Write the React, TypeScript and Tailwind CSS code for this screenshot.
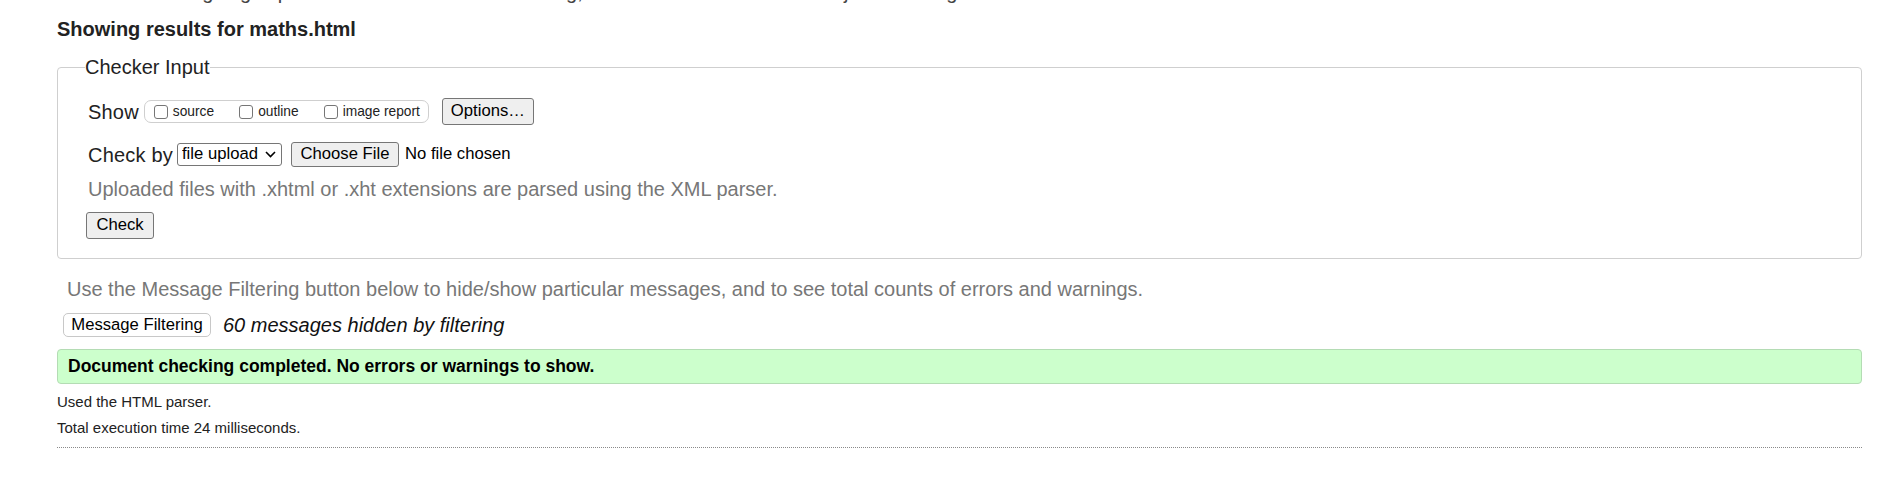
import React from 'react';

const font = "font-['Liberation_Sans',Arial,sans-serif]";

function NativeButton({ children, className = '' }: { children: React.ReactNode; className?: string }) {
  return (
    <button
      type="button"
      className={`inline-flex items-center justify-center border border-[#767676] bg-[#efefef] rounded-[3px] text-[16.67px] leading-none text-black ${className}`}
    >
      {children}
    </button>
  );
}

function Check({ label }: { label: string }) {
  return (
    <label className="flex items-end gap-[5px]">
      <input
        type="checkbox"
        className="appearance-none w-[14px] h-[14px] border border-[#767676] rounded-[3px] bg-white mb-[3px]"
      />
      <span className="text-[13.75px] leading-[20px] text-[#222]">{label}</span>
    </label>
  );
}

export default function App() {
  return (
    <div className={`${font} bg-white text-[#222] min-h-[490px] pl-[57px] pr-[42px]`}>
      <p className="-mt-[20px] -ml-[6px] h-[24px] text-[20px] leading-[24px] text-[#444] whitespace-nowrap">
        This tool is an ongoing experiment in better HTML checking, and its behavior remains subject to change
      </p>

      <h2 className="mt-[13px] h-[24px] text-[20px] leading-[24px] font-bold text-[#222]">
        Showing results for maths.html
      </h2>

      <fieldset className="mt-[14px] border border-[#cfcfcf] rounded-[4px] pl-[29px] pr-[20px] pt-[19px] pb-[19px]">
        <legend className="-ml-[2px] text-[20px] leading-[24px] text-[#222]">Checker Input</legend>

        <div className="flex items-center h-[27px] pl-[1px]">
          <span className="text-[20px] leading-[24px] tracking-[0.2px]">Show</span>
          <div className="ml-[5px] flex items-center gap-[25px] h-[23px] pl-[9px] pr-[8px] border border-[#cfcfcf] rounded-[7px]">
            <Check label="source" />
            <Check label="outline" />
            <Check label="image report" />
          </div>
          <NativeButton className="ml-[13px] h-[27px] w-[92px]">Options…</NativeButton>
        </div>

        <div className="mt-[17px] flex items-center h-[25px] pl-[1px]">
          <span className="text-[20px] leading-[24px] tracking-[0.2px]">Check by</span>
          <div className="ml-[4px] flex items-center h-[23px] w-[105px] border border-[#767676] rounded-[3px] bg-white pl-[4px] pr-[5px]">
            <select className="appearance-none bg-transparent outline-none text-[16.67px] leading-none text-black flex-1">
              <option>file upload</option>
            </select>
            <svg width="11" height="7" viewBox="0 0 11 7" className="shrink-0">
              <path d="M1 1l4.5 4.5L10 1" fill="none" stroke="#000" strokeWidth="1.6" />
            </svg>
          </div>
          <NativeButton className="ml-[9px] h-[25px] w-[108px]">Choose File</NativeButton>
          <span className="ml-[6px] text-[16.67px] leading-none text-black">No file chosen</span>
        </div>

        <p className="mt-[10px] pl-[1px] text-[20px] leading-[24px] text-[#777]">
          Uploaded files with .xhtml or .xht extensions are parsed using the XML parser.
        </p>

        <div className="mt-[11px] -ml-[1px]">
          <NativeButton className="h-[27px] w-[68px]">Check</NativeButton>
        </div>
      </fieldset>

      <p className="mt-[18px] ml-[10px] text-[20px] leading-[24px] text-[#777]">
        Use the Message Filtering button below to hide/show particular messages, and to see total counts of errors and warnings.
      </p>

      <div className="mt-[12px] flex items-center h-[24px] ml-[6px]">
        <button
          type="button"
          className="h-[24px] w-[148px] border border-[#c8c8c8] rounded-[5px] bg-white text-[16.67px] leading-none text-black"
        >
          Message Filtering
        </button>
        <span className="ml-[12px] text-[20px] leading-[24px] italic text-[#111]">60 messages hidden by filtering</span>
      </div>

      <div className="mt-[12px] h-[35px] flex items-center border border-[#b4dcb4] bg-[#ccffcc] rounded-[4px] pl-[10px]">
        <p className="text-[17.5px] font-bold text-black">Document checking completed. No errors or warnings to show.</p>
      </div>

      <div className="mt-[5px] text-[15px] leading-[26px] text-[#222]">
        <p>Used the HTML parser.</p>
        <p>Total execution time 24 milliseconds.</p>
      </div>

      <div className="mt-[6px] border-t border-dotted border-[#8a8a8a]" />
    </div>
  );
}
